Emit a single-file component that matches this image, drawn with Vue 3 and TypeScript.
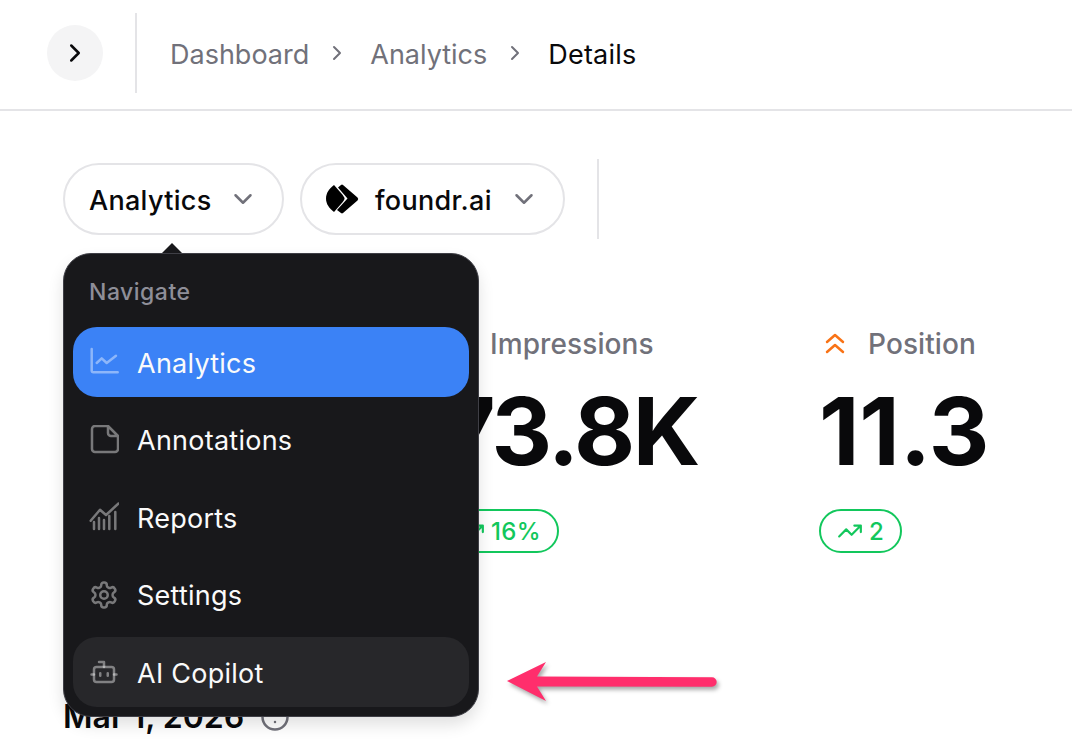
<script setup lang="ts">
const crumbs = ['Dashboard', 'Analytics']
</script>

<template>
  <div class="page">
    <header class="topbar">
      <button class="toggle" type="button" aria-label="Toggle sidebar">
        <svg width="30" height="30" viewBox="0 0 24 24" class="ico dark"><path d="m9 18 6-6-6-6" /></svg>
      </button>
      <span class="vline top"></span>
      <nav class="crumbs">
        <template v-for="c in crumbs" :key="c">
          <span class="crumb">{{ c }}</span>
          <svg width="24" height="24" viewBox="0 0 24 24" class="ico sep"><path d="m9 18 6-6-6-6" /></svg>
        </template>
        <span class="crumb current">Details</span>
      </nav>
    </header>

    <main class="content">
      <div class="toolbar">
        <div class="pillwrap">
          <button class="pill first" type="button">
            <span>Analytics</span>
            <svg width="30" height="30" viewBox="0 0 24 24" class="ico chev"><path d="m6 9 6 6 6-6" /></svg>
          </button>
          <div class="menu">
            <span class="caret"></span>
            <div class="menu-head">Navigate</div>
            <div class="menu-list">
              <a class="item active">
                <svg width="30" height="30" viewBox="0 0 30 30" class="mi"><path d="M2.700 2v21.800a1.500 1.500 0 0 0 1.500 1.500h24.500M7.700 16l5-4.700 5 4.700 9.300-7.300" /></svg>
                <span>Analytics</span>
              </a>
              <a class="item">
                <svg width="30" height="30" viewBox="0 0 30 30" class="mi"><path d="M3 4a3 3 0 0 1 3-3h13l10 10v13a3 3 0 0 1-3 3H6a3 3 0 0 1-3-3z M19 1v7a3 3 0 0 0 3 3h7" /></svg>
                <span>Annotations</span>
              </a>
              <a class="item">
                <svg width="30" height="30" viewBox="0 0 30 30" class="mi"><path d="M1.700 18.700 11 7.700 17 13 29.500 1.500M5 27v-7M10 27V16M15 27v-9M20.300 27V14M26.300 27V10" /></svg>
                <span>Reports</span>
              </a>
              <a class="item">
                <svg width="30" height="30" viewBox="0 0 24 24" class="ico mi2"><path d="M12.220 2h-.44a2 2 0 0 0-2 2v.18a2 2 0 0 1-1 1.730l-.43.25a2 2 0 0 1-2 0l-.15-.08a2 2 0 0 0-2.730.73l-.22.38a2 2 0 0 0 .73 2.730l.15.1a2 2 0 0 1 1 1.720v.51a2 2 0 0 1-1 1.740l-.15.09a2 2 0 0 0-.73 2.730l.22.38a2 2 0 0 0 2.730.73l.15-.08a2 2 0 0 1 2 0l.43.25a2 2 0 0 1 1 1.730V20a2 2 0 0 0 2 2h.44a2 2 0 0 0 2-2v-.18a2 2 0 0 1 1-1.730l.43-.25a2 2 0 0 1 2 0l.15.08a2 2 0 0 0 2.730-.73l.22-.39a2 2 0 0 0-.73-2.730l-.15-.08a2 2 0 0 1-1-1.740v-.5a2 2 0 0 1 1-1.740l.15-.09a2 2 0 0 0 .73-2.730l-.22-.38a2 2 0 0 0-2.730-.73l-.15.08a2 2 0 0 1-2 0l-.43-.25a2 2 0 0 1-1-1.730V4a2 2 0 0 0-2-2z" /><circle cx="12" cy="12" r="3" /></svg>
                <span>Settings</span>
              </a>
              <a class="item hover">
                <svg width="30" height="30" viewBox="0 0 24 24" class="ico mi2"><path d="M12 8V4H8" /><rect x="4" y="8" width="16" height="12" rx="2" /><path d="M2 14h2M20 14h2M15 13v2M9 13v2" /></svg>
                <span>AI Copilot</span>
              </a>
            </div>
          </div>
        </div>
        <button class="pill second" type="button">
          <svg width="33" height="30" viewBox="0 0 33 30" class="logo">
            <path d="M8 1C3 5 0 9 0 14.500S3 24 8 28l7-8q3.500-4 3.500-5.500T15 9z" />
            <path d="M12 3.500 15 1q1-.8 2 0l14.500 12.500q1.500 1.500 0 3L17 29q-1 .8-2 0l-4-3 10.500-11.500z" />
          </svg>
          <span>foundr.ai</span>
          <svg width="30" height="30" viewBox="0 0 24 24" class="ico chev"><path d="m6 9 6 6 6-6" /></svg>
        </button>
        <span class="vline tool"></span>
      </div>

      <section class="metrics">
        <div class="metric impressions">
          <div class="m-label"><span>Impressions</span></div>
          <div class="m-value">73.8K</div>
          <div class="badge">
            <svg width="26" height="26" viewBox="0 0 24 24" class="ico"><path d="M22 7 13.500 15.500 8.500 10.500 2 17M16 7h6v6" /></svg>
            <span>16%</span>
          </div>
        </div>
        <div class="metric">
          <div class="m-label">
            <svg width="20" height="24" viewBox="0 0 20 24" class="ico orange"><path d="m2 10 8-7 8 7M2 20l8-7 8 7" /></svg>
            <span>Position</span>
          </div>
          <div class="m-value wide">11.3</div>
          <div class="badge">
            <svg width="26" height="26" viewBox="0 0 24 24" class="ico"><path d="M22 7 13.500 15.500 8.500 10.500 2 17M16 7h6v6" /></svg>
            <span>2</span>
          </div>
        </div>
      </section>

      <div class="date">
        <span>Mar 1, 2026</span>
        <svg width="30" height="30" viewBox="0 0 24 24" class="ico info"><circle cx="12" cy="12" r="10" /><path d="M12 16h.01M12 8h.01" /></svg>
      </div>
    </main>

    <svg class="arrow" width="240" height="70" viewBox="0 0 240 70">
      <path d="M7 31 46 12 37 26.500 212 27.300a4.700 4.700 0 0 1 0 9.400L37 36.500 46 51z" />
    </svg>
  </div>
</template>

<style>
html, body { margin: 0; background: #fff; }
</style>

<style scoped>
.page {
  position: relative;
  width: 1072px;
  height: 740px;
  overflow: hidden;
  background: #fff;
  font-family: Inter, "Liberation Sans", sans-serif;
  color: #09090b;
}
.ico, .mi {
  fill: none;
  stroke: currentColor;
  stroke-width: 2;
  stroke-linecap: round;
  stroke-linejoin: round;
}
.mi { stroke-width: 2.500; }
.topbar {
  box-sizing: border-box;
  height: 111px;
  border-bottom: 2px solid #e4e4e7;
  display: flex;
  align-items: center;
  padding: 0 0 4px 47px;
}
.toggle {
  width: 56px;
  height: 56px;
  border: 0;
  padding: 0;
  border-radius: 50%;
  background: #f4f4f5;
  display: flex;
  align-items: center;
  justify-content: center;
  color: #09090b;
}
.vline { display: block; width: 2px; background: #e4e4e7; }
.vline.top { height: 80px; margin-left: 32px; }
.crumbs {
  display: flex;
  align-items: center;
  margin-left: 33px;
  padding-top: 3px;
  font-size: 27px;
}
.crumb { color: #71717a; }
.crumb.current { color: #09090b; letter-spacing: 0.2px; }
.sep { color: #71717a; margin: 0 21px 3px 16px; }
.content { padding: 52px 0 0 63px; }
.toolbar {
  display: flex;
  align-items: center;
  height: 72px;
  gap: 16px;
}
.pillwrap { position: relative; }
.pill {
  box-sizing: border-box;
  height: 72px;
  border: 2px solid #e4e4e7;
  border-radius: 36px;
  background: #fff;
  display: flex;
  align-items: center;
  font: 450 27px Inter, "Liberation Sans", sans-serif;
  letter-spacing: 0.3px;
  color: #09090b;
}
.pill > span { padding-top: 2px; }
.pill.first { width: 221px; padding: 0 0 0 24px; gap: 17px; }
.pill.second { width: 265px; padding: 0 0 0 24px; gap: 16px; }
.chev { color: #71717a; }
.second .chev { margin-left: 1px; }
.logo { fill: #000; }
.vline.tool { height: 80px; margin-left: 16px; }
.menu {
  position: absolute;
  z-index: 2;
  left: 0;
  top: 90px;
  box-sizing: border-box;
  width: 416px;
  height: 464px;
  padding: 0 9px;
  border: 1px solid #3f3f46;
  border-radius: 28px;
  background: #18181b;
  box-shadow: 0 8px 16px rgba(0, 0, 0, 0.12);
}
.caret {
  position: absolute;
  left: 98px;
  top: -11px;
  width: 0;
  height: 0;
  border-left: 10px solid transparent;
  border-right: 10px solid transparent;
  border-bottom: 10px solid #18181b;
}
.menu-head {
  height: 73px;
  padding: 2px 0 0 16px;
  box-sizing: border-box;
  display: flex;
  align-items: center;
  color: #8e8e98;
  font-size: 23px;
  font-weight: 500;
  letter-spacing: 0.5px;
}
.menu-list { display: flex; flex-direction: column; gap: 7.5px; }
.item {
  box-sizing: border-box;
  height: 70px;
  border-radius: 24px;
  padding-left: 16px;
  display: flex;
  align-items: center;
  gap: 18px;
  color: #fafafa;
  font-size: 27px;
  letter-spacing: 0.25px;
}
.item span { padding-top: 2px; }
.item.active { background: #3b82f6; }
.item.hover { background: #27272a; }
.mi, .mi2 { color: rgba(255, 255, 255, 0.42); flex: none; }
.metrics {
  display: grid;
  grid-template-columns: repeat(2, 378px);
  margin: 90px 0 0 378px;
}
.m-label {
  box-sizing: border-box;
  display: flex;
  align-items: center;
  height: 36px;
  gap: 23px;
  padding: 1px 0 0 6px;
  color: #71717a;
  font-size: 28px;
  font-weight: 500;
  letter-spacing: 0.1px;
}
.impressions .m-label { padding-left: 49px; }
.orange { color: #f97316; stroke-width: 2.500; }
.m-value {
  margin-top: 14px;
  height: 112px;
  line-height: 112px;
  font-size: 94px;
  font-weight: 700;
  letter-spacing: -2.500px;
  color: #09090b;
}
.m-value.wide { letter-spacing: -0.2px; }
.badge {
  box-sizing: border-box;
  display: inline-flex;
  align-items: center;
  gap: 6px;
  height: 44px;
  margin-top: 22px;
  padding: 0 16px;
  border: 2px solid #12c75c;
  border-radius: 22px;
  color: #12c75c;
  font-size: 24px;
  font-weight: 500;
  letter-spacing: 0.3px;
}
.date {
  display: flex;
  align-items: center;
  gap: 16px;
  margin-top: 144px;
  font-size: 32px;
  font-weight: 600;
}
.info { color: #71717a; }
.arrow {
  position: absolute;
  z-index: 3;
  left: 500px;
  top: 650px;
  filter: drop-shadow(2px 3px 2px rgba(0, 0, 0, 0.35));
}
.arrow path { fill: #ff2e6c; }
</style>
